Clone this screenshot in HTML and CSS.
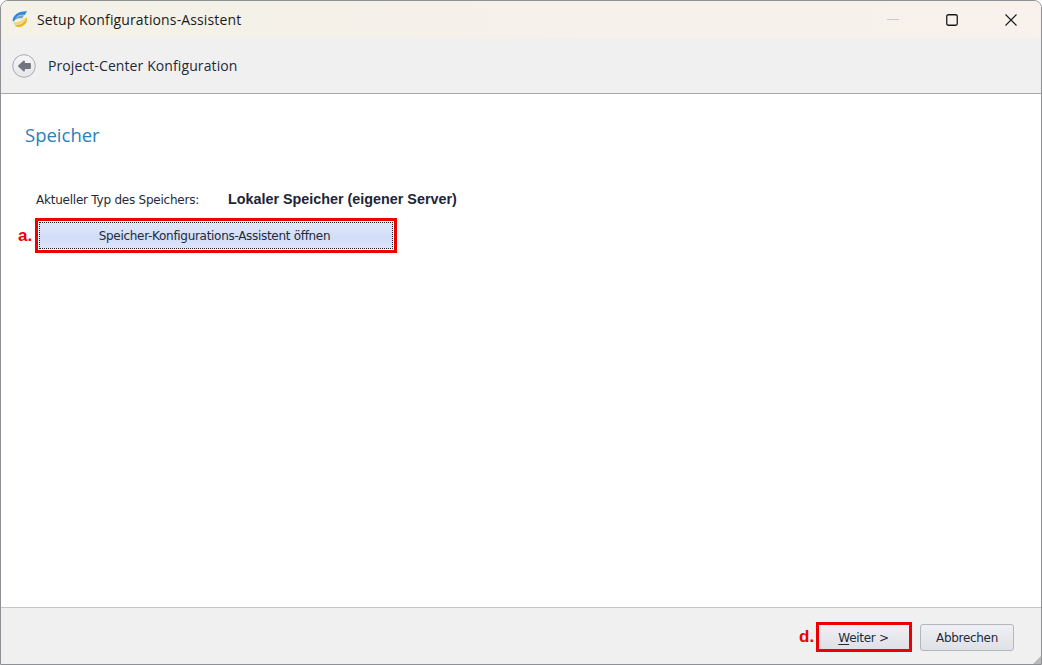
FILE: index.html
```html
<!DOCTYPE html>
<html lang="de">
<head>
<meta charset="utf-8">
<title>Setup Konfigurations-Assistent</title>
<link rel="stylesheet" href="styles.css">
</head>
<body>
<div class="window">
  <header class="titlebar">
    <svg class="app-icon" width="16" height="16" viewBox="0 0 16 16">
      <path d="M.8 10.500C-.2 5 6 -.2 15 .2L12.800 4C8.500 3 5 4.500 4 7.500 3.300 9 2 10.300 .8 10.500Z" fill="#2f88d8"/>
      <path d="M3.300 9C4.300 5.500 8 3.800 12 4.500L10 7.500C7.500 6.800 5 7.500 3.300 9Z" fill="#7a9fbf"/>
      <path d="M2.800 13.800C7.500 14.500 12.500 12 14.500 6.200 16.800 10.500 11.500 16.800 5.500 15.900 4.300 15.700 3.400 15 2.800 13.800Z" fill="#e8b820"/>
      <path d="M1.500 10.800C6 11.800 10 10.500 12.500 7.300L14.500 6.800C12 11.500 7.500 14 2.800 13.800 2 13 1.600 12 1.500 10.800Z" fill="#f2d868"/>
    </svg>
    <span class="title">Setup Konfigurations-Assistent</span>
    <div class="caption">
      <span class="cap-btn"><svg width="12" height="12" viewBox="0 0 12 12"><path d="M0 5.500H12" stroke="#c9c9c9" fill="none"/></svg></span>
      <span class="cap-btn"><svg width="12" height="12" viewBox="0 0 12 12"><rect x=".75" y=".75" width="10.500" height="10.500" rx="1.500" stroke="#1a1a1a" stroke-width="1.300" fill="none"/></svg></span>
      <span class="cap-btn"><svg width="12" height="12" viewBox="0 0 12 12"><path d="M.5 .5L11.500 11.500M11.500 .5L.5 11.500" stroke="#1a1a1a" stroke-width="1.100" fill="none"/></svg></span>
    </div>
  </header>
  <div class="navbar">
    <span class="back">
      <svg width="24" height="24" viewBox="0 0 24 24">
        <defs><linearGradient id="backFill" x1="0" y1="0" x2="0" y2="1"><stop offset="0" stop-color="#f6f6f8"/><stop offset="1" stop-color="#e6e6ea"/></linearGradient></defs>
        <circle cx="12" cy="12" r="11.300" fill="url(#backFill)" stroke="#a9a9b1" stroke-width="1"/>
        <path d="M7 12L12 7.500V10H18V14H12V16.500Z" fill="#74747f" stroke="#74747f" stroke-width="1.800" stroke-linejoin="round"/>
      </svg>
    </span>
    <span class="nav-title">Project-Center Konfiguration</span>
  </div>
  <main class="content">
    <h1 class="heading">Speicher</h1>
    <div class="type-row">
      <span class="type-label">Aktueller Typ des Speichers:</span>
      <span class="type-value">Lokaler Speicher (eigener Server)</span>
    </div>
    <div class="marked-row">
      <span class="mark">a.</span>
      <div class="red-box wizard-box">
        <button class="btn wizard" type="button"><span>Speicher-Konfigurations-Assistent öffnen</span></button>
      </div>
    </div>
  </main>
  <footer class="footer">
    <span class="mark mark-d">d.</span>
    <div class="red-box next-box">
      <button class="btn action next" type="button"><u>W</u>eiter &gt;</button>
    </div>
    <button class="btn action cancel" type="button">Abbrechen</button>
    <svg class="grip" width="8" height="8" viewBox="0 0 8 8"><path d="M8 0V8H0Z" fill="#b9b9b9"/></svg>
  </footer>
</div>
</body>
</html>
```
FILE: styles.css
```css
* { box-sizing: border-box; }
html, body { margin: 0; padding: 0; background: #fff; }
body { width: 1042px; height: 665px; overflow: hidden; }
.window {
  position: relative;
  width: 1042px; height: 665px;
  display: flex; flex-direction: column;
  border: 1px solid #8e9095;
  border-radius: 8px 8px 0 0;
  overflow: hidden;
  background: #fff;
}
.titlebar {
  height: 37px; flex: none;
  display: flex; align-items: center;
  padding-left: 11px;
  background: linear-gradient(90deg, #f3f1e8, #f8f1ec);
}
.app-icon { flex: none; margin-right: 9px; margin-top: -2px; }
.title { font: 14px "Open Sans", sans-serif; color: #1a1a1a; letter-spacing: .13px; }
.caption { margin-left: auto; margin-right: 1px; display: flex; }
.cap-btn { width: 58.800px; height: 37px; display: flex; align-items: center; justify-content: center; }
.navbar {
  height: 56px; flex: none;
  display: flex; align-items: center;
  padding-left: 11px;
  background: #f0f0f0;
  border-bottom: 1px solid #a9a9a9;
}
.back { width: 24px; height: 24px; margin-right: 12px; }
.nav-title { font: 14px "Open Sans", sans-serif; color: #1c2a3a; letter-spacing: .1px; }
.content { flex: 1; padding: 29px 0 0 24px; background: #fff; }
.heading { margin: 0; font: 400 18.500px/24px "Open Sans", sans-serif; color: #2a80b9; letter-spacing: 0; }
.type-row { display: flex; align-items: baseline; margin: 42px 0 0 11px; height: 23px; }
.type-label { width: 192px; font: 12px/20px "DejaVu Sans", sans-serif; color: #1f2a3a; letter-spacing: -.23px; }
.type-value { font: 700 14.350px/20px "Liberation Sans", sans-serif; color: #1c2638; letter-spacing: 0; }
.marked-row { display: flex; align-items: center; margin: 6px 0 0 -7px; }
.mark { font: 700 17px/20px "Liberation Sans", sans-serif; color: #f00000; width: 17px; }
.red-box { border: 3px solid #ee0000; background: #fff; }
.wizard-box { width: 362px; height: 35px; padding: 1px; }
.btn { display: block; padding: 0; cursor: default; font: 12px "DejaVu Sans", sans-serif; color: #1f2a3a; letter-spacing: -.3px; }
.wizard {
  width: 100%; height: 100%;
  padding-right: 3px;
  border: 1px dotted #222;
  background: linear-gradient(#e0e7f9, #d2ddf8 60%, #dce4f9);
}
.footer {
  height: 57px; flex: none;
  display: flex; align-items: center; justify-content: flex-end;
  position: relative;
  padding: 2px 27px 0 0;
  background: #f0f0f0;
  border-top: 1px solid #c4c4c4;
}
.mark-d { width: 17px; }
.next-box { width: 96px; height: 30px; margin-right: 8px; }
.action {
  background: linear-gradient(#eef0f4, #dfe1e7);
}
.next { width: 100%; height: 100%; border: 0; padding: 1px 1px 0 0; }
.next u { text-underline-offset: 2px; }
.cancel { width: 94px; height: 27px; border: 1px solid #b4b6bd; border-radius: 3px; padding-top: 1px; }
.grip { position: absolute; right: 0; bottom: 0; }
```
